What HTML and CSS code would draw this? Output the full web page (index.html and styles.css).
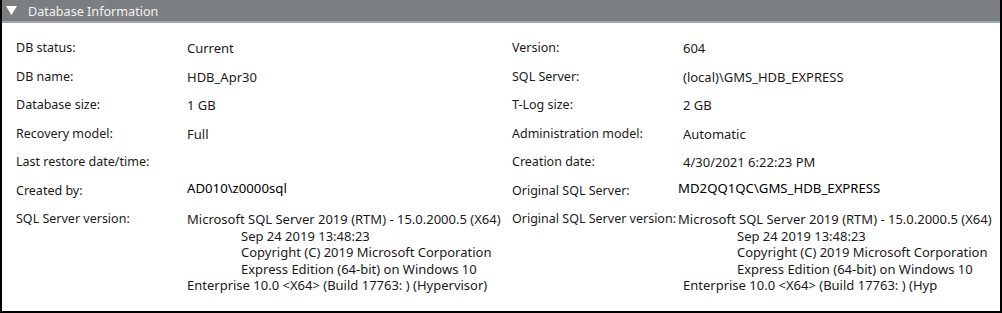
FILE: index.html
```html
<!DOCTYPE html>
<html lang="en">
<head>
  <meta charset="UTF-8" />
  <title>Database Information</title>
  <link rel="stylesheet" href="styles.css">
</head>
<body>
  <div class="panel">
    <div class="panel-header">
      <svg class="toggle" width="11" height="9" viewBox="0 0 11 9"><polygon points="0,0 11,0 5.5,9" fill="#ffffff"/></svg>
      <span class="title">Database Information</span>
    </div>
    <div class="panel-body">
      <div class="column">
        <div class="row"><span class="label">DB status:</span><span class="value">Current</span></div>
        <div class="row"><span class="label">DB name:</span><span class="value">HDB_Apr30</span></div>
        <div class="row"><span class="label">Database size:</span><span class="value">1 GB</span></div>
        <div class="row"><span class="label">Recovery model:</span><span class="value">Full</span></div>
        <div class="row"><span class="label">Last restore date/time:</span><span class="value"></span></div>
        <div class="row"><span class="label">Created by:</span><span class="value raised">AD010\z0000sql</span></div>
        <div class="row multi">
          <span class="label">SQL Server version:</span>
          <div class="value lines">
            <div>Microsoft SQL Server 2019 (RTM) - 15.0.2000.5 (X64)</div>
            <div class="indent">Sep 24 2019 13:48:23</div>
            <div class="indent">Copyright (C) 2019 Microsoft Corporation</div>
            <div class="indent">Express Edition (64-bit) on Windows 10</div>
            <div>Enterprise 10.0 &lt;X64&gt; (Build 17763: ) (Hypervisor)</div>
          </div>
        </div>
      </div>
      <div class="column">
        <div class="row"><span class="label">Version:</span><span class="value">604</span></div>
        <div class="row"><span class="label">SQL Server:</span><span class="value">(local)\GMS_HDB_EXPRESS</span></div>
        <div class="row"><span class="label">T-Log size:</span><span class="value">2 GB</span></div>
        <div class="row"><span class="label">Administration model:</span><span class="value">Automatic</span></div>
        <div class="row"><span class="label">Creation date:</span><span class="value">4/30/2021 6:22:23 PM</span></div>
        <div class="row"><span class="label">Original SQL Server:</span><span class="value raised pulled">MD2QQ1QC\GMS_HDB_EXPRESS</span></div>
        <div class="row multi">
          <span class="label">Original SQL Server version:</span>
          <div class="value lines">
            <div class="pulled">Microsoft SQL Server 2019 (RTM) - 15.0.2000.5 (X64)</div>
            <div class="indent">Sep 24 2019 13:48:23</div>
            <div class="indent">Copyright (C) 2019 Microsoft Corporation</div>
            <div class="indent">Express Edition (64-bit) on Windows 10</div>
            <div>Enterprise 10.0 &lt;X64&gt; (Build 17763: ) (Hyp</div>
          </div>
        </div>
      </div>
    </div>
  </div>
</body>
</html>
```

FILE: styles.css
```css
body {
  margin: 0;
  background: #ffffff;
  font-family: "Noto Sans", "Open Sans", sans-serif;
  color: #1a1a1a;
}

.panel {
  width: 1002px;
  height: 313px;
  box-sizing: border-box;
  border-right: 2px solid #000000;
  border-bottom: 2px solid #000000;
  border-left: 2px solid #000000;
  overflow: hidden;
}

.panel-header {
  display: flex;
  align-items: center;
  height: 21px;
  margin-left: -2px;
  padding-left: 6px;
  background: #7b7f81;
  border-bottom: 2px solid #a3a7a9;
}

.toggle {
  margin-right: 11px;
}

.title {
  color: #f2f2f2;
  font-size: 12.6px;
  padding-top: 1px;
}

.panel-body {
  display: flex;
  padding: 17px 0 0 14px;
}

.column {
  width: 496px;
  flex-shrink: 0;
  display: flex;
  flex-direction: column;
}

.column + .column {
  flex: 1;
  width: auto;
  min-width: 0;
}

.row {
  display: flex;
  align-items: flex-start;
  height: 28.5px;
  font-size: 12.5px;
  line-height: 16px;
}

.row.multi {
  height: auto;
}

.label {
  min-width: 167px;
  margin-right: 4px;
  white-space: nowrap;
}

.value {
  font-size: 13px;
  white-space: nowrap;
}

.value.raised {
  margin-top: -3px;
  font-size: 13.2px;
  color: #000000;
}

.pulled {
  margin-left: -5px;
}

.lines div {
  line-height: 16.5px;
}

.lines .indent {
  padding-left: 54px;
}
```
